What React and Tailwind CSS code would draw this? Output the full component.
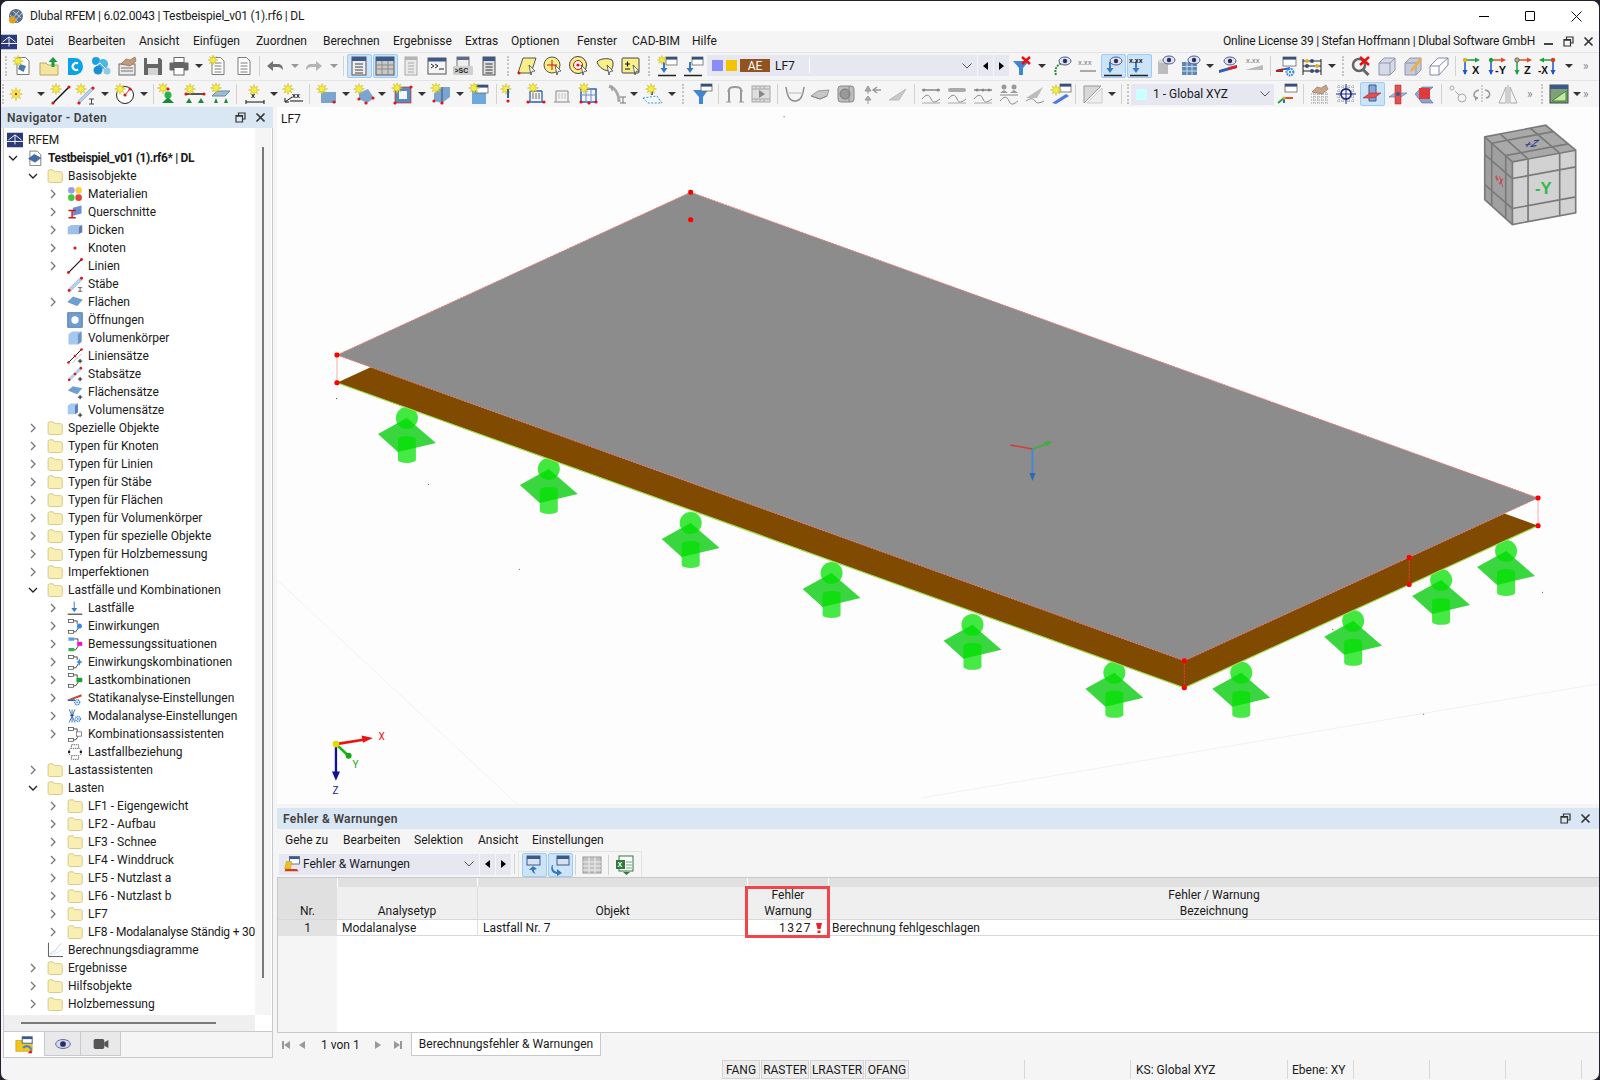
import React from 'react';

// ---------- kleine Helfer fuer die Icons ----------
const S = ({ children, s = 22 }) => (
  <svg width={s} height={s} viewBox="0 0 22 22" className="block shrink-0">
    {children}
  </svg>
);

const burst = (cx, cy, r) => {
  const pts = [];
  for (let i = 0; i < 16; i++) {
    const a = (i * Math.PI) / 8;
    const k = i % 2 ? r * 0.45 : r;
    pts.push(`${cx + k * Math.cos(a)},${cy + k * Math.sin(a)}`);
  }
  return pts.join(' ');
};
const Star = ({ x = 6, y = 6, r = 5.5 }) => <polygon points={burst(x, y, r)} fill="#f6ee3c" stroke="#c9b227" strokeWidth=".5" />;
const Dot = ({ x, y, r = 1.6, c = '#e01515' }) => <circle cx={x} cy={y} r={r} fill={c} />;
const Eye = ({ x = 15, y = 6 }) => (
  <g>
    <ellipse cx={x} cy={y} rx="6" ry="4" fill="#dfe3f2" stroke="#4b5a8c" />
    <circle cx={x} cy={y} r="2.2" fill="#27305f" />
  </g>
);
const MiniWin = ({ x = 10, y = 2, w = 11, h = 8 }) => (
  <g>
    <rect x={x} y={y} width={w} height={h} fill="#fff" stroke="#666" strokeWidth=".8" />
    <rect x={x} y={y} width={w} height="2.6" fill="#35507f" />
  </g>
);
const DocShape = ({ c = '#7a7a7a' }) => <path d="M5 2.5h8.5l3.5 3.5v13.5H5z" fill="#fff" stroke={c} />;
const DocLines = ({ c = '#7a7a7a' }) => <path d="M7.5 8h7M7.5 11h7M7.5 14h7M7.5 17h7" stroke={c} strokeWidth="1" />;
const Plus = ({ x = 18, y = 18 }) => <path d={`M${x - 3} ${y}h6M${x} ${y - 3}v6`} stroke="#111" strokeWidth="1.3" />;
const Gear = ({ x = 16, y = 17, c = '#3a8de0' }) => (
  <g>
    <circle cx={x} cy={y} r="3.4" fill="none" stroke={c} strokeWidth="2" strokeDasharray="1.6 .8" />
    <circle cx={x} cy={y} r="1.2" fill={c} />
  </g>
);
const LoadArrow = ({ x = 9, c = '#3b78c4' }) => (
  <g>
    <path d={`M${x} 7v8`} stroke={c} strokeWidth="2" />
    <path d={`M${x - 3.5} 13h7l-3.5 5z`} fill={c} />
    <path d="M2 20.5h18" stroke="#222" strokeWidth="1.4" />
  </g>
);
const SmallText = ({ x, y, c = '#222', size = 7, children }) => (
  <text x={x} y={y} fill={c} fontSize={size} fontWeight="700" fontFamily="'Liberation Sans', sans-serif">
    {children}
  </text>
);
const Cursor = () => <path d="M13 10l6 6-3 .4-1 3.6z" fill="#fff" stroke="#444" strokeWidth=".8" />;

const I = {
  neu: <S><DocShape c="#777" /><path d="M8 9l6 2-2.5 6-5.5-3z" fill="#4a78b0" /><Star x={6} y={6} /></S>,
  open: <S><path d="M2 8h6l2 2h10v10H2z" fill="#f3e4a0" stroke="#b9a863" /><path d="M15 2l4.5 5h-3v5h-3V7h-3z" fill="#1c9a3c" /></S>,
  dlubal: <S><path d="M4 3h7a8 8.5 0 0 1 0 17H4z" fill="#08a3ea" /><path d="M14 8.5a3.5 3.5 0 1 0 0 6" stroke="#fff" strokeWidth="2.2" fill="none" /></S>,
  mol: <S><circle cx="6" cy="6" r="4" fill="#18a0e2" /><circle cx="13" cy="9" r="5" fill="#4ab6ea" /><circle cx="8" cy="15" r="4.5" fill="#1c8fd0" /><circle cx="17" cy="16" r="3.5" fill="#8ccbe8" /><path d="M4 12l6-4 6 6" stroke="#fff" fill="none" /></S>,
  hand: <S><rect x="3" y="9" width="16" height="11" fill="#e8e8e8" stroke="#6a6a6a" /><path d="M5 13h12M5 16h12" stroke="#777" /><path d="M5 9l5-5 4 1 5-3 1 4-6 5z" fill="#c49a7a" stroke="#7a5a44" strokeWidth=".6" /></S>,
  save: <S><path d="M2 3h16l2 2v15H2z" fill="#666" /><rect x="5" y="3" width="11" height="6" fill="#f2f2f2" /><rect x="6" y="13" width="10" height="7" fill="#d4d4d4" /></S>,
  print: <S><rect x="6" y="2.5" width="10" height="5" fill="#fff" stroke="#666" /><rect x="1.5" y="7.5" width="19" height="8" rx="1" fill="#666" /><rect x="6" y="12.5" width="10" height="7.5" fill="#fff" stroke="#666" /></S>,
  docStar: <S><DocShape /><DocLines /><Star x={6} y={5} r={5} /></S>,
  doc: <S><DocShape /><DocLines /></S>,
  undo: <S><path d="M3 11l6-5v3h5c3 0 5 2 5 6-2-2-3-3-5-3H9v4z" fill="#737373" /></S>,
  redo: <S><path d="M19 11l-6-5v3H8c-3 0-5 2-5 6 2-2 3-3 5-3h5v4z" fill="#b5b5b5" /></S>,
  panelList: <S><rect x="4" y="2" width="14" height="18" fill="#ededed" stroke="#555" /><rect x="4" y="2" width="14" height="4" fill="#3a5a8c" /><path d="M7 9h8M7 12h8M7 15h8M7 18h8" stroke="#444" /></S>,
  panelGrid: <S><rect x="2" y="2" width="18" height="18" fill="#c9c9c9" stroke="#555" /><rect x="2" y="2" width="18" height="4" fill="#3a5a8c" /><path d="M2 10h18M2 14h18M8 6v14M14 6v14" stroke="#8a8a8a" /></S>,
  docGray: <S><rect x="5" y="2" width="12" height="18" fill="#e9e9e9" stroke="#aaa" /><rect x="5" y="2" width="12" height="3" fill="#b5b5b5" /><path d="M8 8h6M8 11h6M8 14h6M8 17h6" stroke="#aaa" /></S>,
  console: <S><rect x="2" y="3" width="18" height="16" fill="#f5f5f5" stroke="#555" /><rect x="2" y="3" width="18" height="3.5" fill="#3a5a8c" /><path d="M5 9l3 2-3 2M9 9l3 2-3 2M13 14h5" stroke="#222" fill="none" /></S>,
  sc: <S><rect x="5" y="2" width="12" height="10" fill="#eee" stroke="#777" /><rect x="5" y="2" width="12" height="3" fill="#5a6c8a" /><rect x="1" y="11" width="20" height="9" rx="1" fill="#cfcfcf" /><SmallText x={2.5} y={18.2}>{'>SC'}</SmallText></S>,
  winList: <S><rect x="5" y="2" width="12" height="18" fill="#ddd" stroke="#555" /><rect x="5" y="2" width="12" height="4" fill="#3a5a8c" /><path d="M7.5 9h7M7.5 12h7M7.5 15h7M7.5 18h7" stroke="#333" /></S>,
  para: <S><path d="M7 3h13l-5 15H2z" fill="#f8ef88" stroke="#555" /><Dot x={3} y={18} r={1.5} /><Cursor /></S>,
  circ: <S><circle cx="10" cy="10" r="8" fill="#f8ef88" stroke="#555" /><path d="M5 10h10M10 5v10" stroke="#d01010" /><Cursor /></S>,
  target: <S><circle cx="10" cy="10" r="8.5" fill="#f8ef88" stroke="#444" /><circle cx="10" cy="10" r="4.5" fill="#fff" stroke="#d01010" /><Dot x={10} y={10} /><Cursor /></S>,
  blob: <S><path d="M3 7c3-4 12-4 15-2 2 3 1 9-2 11-5 0-11-3-13-9z" fill="#f8ef88" stroke="#444" /><Cursor /></S>,
  boxPm: <S><rect x="2" y="3" width="17" height="15" rx="1" fill="#f8ef88" stroke="#444" /><path d="M5 9h5M7.5 6.5v5M5 14h5" stroke="#111" strokeWidth="1.2" /><Cursor /></S>,
  loadStar: <S><MiniWin /><LoadArrow x={8} /><Star x={6} y={5} r={4.5} /></S>,
  loadWin: <S><MiniWin /><LoadArrow x={8} /></S>,
  filterX: <S><path d="M2 6h16l-6 7v7H8v-7z" fill="#3f86d4" /><path d="M11 2l8 7M19 2l-8 7" stroke="#e81010" strokeWidth="2.5" /></S>,
  eyeBar: <S><path d="M5 20c-2-6 1-10 6-12" stroke="#2d8a3c" strokeWidth="2" fill="none" strokeDasharray="2 1" /><Eye x={14} y={6} /></S>,
  xxxGray: <S><path d="M3 16h16" stroke="#aaa" strokeWidth="2" /><SmallText x={1} y={10} c="#999">x.xx</SmallText></S>,
  loadEye: <S><LoadArrow x={8} /><Eye x={14} y={6} /></S>,
  loadXxx: <S><LoadArrow x={8} /><SmallText x={1} y={8} c="#111">x.xx</SmallText></S>,
  cylEye: <S><path d="M4 6h10v13H4z" fill="#bcbcbc" /><ellipse cx="9" cy="6" rx="5" ry="2" fill="#d9d9d9" /><Eye x={15} y={5} /></S>,
  gridEye: <S><rect x="2" y="7" width="15" height="13" fill="#5c8ab5" /><path d="M2 11.5h15M2 16h15M7 7v13M12 7v13" stroke="#c9dbe8" /><Eye x={14} y={5} /></S>,
  beamEye: <S><path d="M2 15l18-5v3L2 18z" fill="#2d5fb8" /><path d="M11 12.5l9-2.5v3l-9 2z" fill="#e02020" /><Eye x={13} y={6} /></S>,
  beamXxx: <S><path d="M2 15l18-5v5H2z" fill="#b9b9b9" /><SmallText x={3} y={8} c="#999">x.xx</SmallText></S>,
  winGear: <S><MiniWin x={8} y={2} w={13} h={9} /><path d="M1 15l14-3v3H1z" fill="#2d5fb8" /><path d="M1 15l7-1.5V17H1z" fill="#b81f1f" /><Gear x={15} y={17} /></S>,
  abacus: <S><path d="M2 4v16M20 4v16M2 6h18M2 11h18M2 16h18" stroke="#222" /><Dot x={6} y={6} c="#e0b020" r={2} /><Dot x={11} y={6} c="#35507f" r={2} /><Dot x={16} y={11} c="#e0b020" r={2} /><Dot x={6} y={11} c="#35507f" r={2} /><Dot x={11} y={16} c="#35507f" r={2} /><Dot x={16} y={16} c="#35507f" r={2} /></S>,
  searchX: <S><circle cx="9" cy="10" r="6" fill="none" stroke="#666" strokeWidth="2.5" /><path d="M13.5 15l5 5" stroke="#666" strokeWidth="3" /><path d="M10 2l9 8M19 2l-9 8" stroke="#e81010" strokeWidth="2.5" /></S>,
  cube: <S><path d="M3 8l5-5h11v12l-5 5H3z" fill="#d5d9e8" stroke="#8f95ae" /><path d="M3 8h11v12M14 8l5-5" stroke="#8f95ae" fill="none" /></S>,
  cubePen: <S><path d="M3 8l5-5h11v12l-5 5H3z" fill="#c5c9dc" stroke="#8f95ae" /><path d="M3 8h11v12M14 8l5-5" stroke="#8f95ae" fill="none" /><path d="M9 14l9-11 2 2-9 11-3 1z" fill="#f0b040" /></S>,
  cubeOpen: <S><path d="M2 11l8-8h10v7l-9 10H2z" fill="#fff" stroke="#7f8aa8" /><path d="M2 11h9v9M11 11l9-8" stroke="#7f8aa8" fill="none" /></S>,
  axisX: <S><path d="M5 5v14" stroke="#1f55c8" strokeWidth="1.5" /><path d="M2.5 15h5L5 20z" fill="#1f55c8" /><path d="M5 5h12" stroke="#1da23a" strokeWidth="1.5" /><path d="M15 2.5v5l5-2.5z" fill="#1da23a" /><Dot x={5} y={5} r={2.2} c="#e0b020" /><SmallText x={12} y={19} c="#111" size={11}>X</SmallText></S>,
  axisY: <S><path d="M5 5v14" stroke="#1f55c8" strokeWidth="1.5" /><path d="M2.5 15h5L5 20z" fill="#1f55c8" /><path d="M5 5h12" stroke="#e0501c" strokeWidth="1.5" /><path d="M15 2.5v5l5-2.5z" fill="#e0501c" /><Dot x={5} y={5} r={2.2} c="#1da23a" /><SmallText x={9} y={19} c="#111" size={11}>-Y</SmallText></S>,
  axisZ: <S><path d="M5 5v14" stroke="#1da23a" strokeWidth="1.5" /><path d="M2.5 15h5L5 20z" fill="#1da23a" /><path d="M5 5h12" stroke="#e0501c" strokeWidth="1.5" /><path d="M15 2.5v5l5-2.5z" fill="#e0501c" /><circle cx="5" cy="5" r="2.2" fill="#e0b020" stroke="#1f55c8" strokeWidth=".8" /><SmallText x={12} y={19} c="#111" size={11}>Z</SmallText></S>,
  axisMx: <S><path d="M15 5v14" stroke="#1f55c8" strokeWidth="1.5" /><path d="M12.5 15h5L15 20z" fill="#1f55c8" /><path d="M15 5H4" stroke="#1da23a" strokeWidth="1.5" /><path d="M6 2.5v5L1 5z" fill="#1da23a" /><Dot x={15} y={5} r={2.2} c="#d8401c" /><SmallText x={0} y={19} c="#111" size={10}>-X</SmallText></S>,

  // zweite Zeile
  starOnly: <S><Star x={9} y={11} r={6.5} /><Dot x={9} y={11} r={1.2} /></S>,
  lineStar: <S><path d="M3 20L19 4" stroke="#111" strokeWidth="1.4" /><Dot x={3} y={20} /><Dot x={19} y={4} /><Star x={6} y={6} /></S>,
  beamStar: <S><path d="M3 18L17 4l2 2L5 20z" fill="#b8d0ea" stroke="#7ba0cc" strokeWidth=".6" /><Dot x={4} y={20} /><Dot x={18} y={5} /><Star x={6} y={6} /><path d="M14 16h5M14 21h5M16.5 16v5" stroke="#444" /></S>,
  circStar: <S><circle cx="11" cy="12" r="8.5" fill="#fff" stroke="#222" /><path d="M11 12l5-6" stroke="#e01515" /><Dot x={16} y={6} /><Dot x={11} y={12} /><Star x={6} y={6} /></S>,
  supStar: <S><path d="M5 20l6-6 6 6z" fill="#1c8a3c" /><circle cx="11" cy="12" r="3.5" fill="#27b34a" /><Star x={6} y={5} /><Dot x={11} y={6} /></S>,
  supLine: <S><path d="M2 11h18" stroke="#222" strokeWidth="1.5" /><Dot x={2} y={11} /><Dot x={20} y={11} /><path d="M2 20l3-5 3 5zM14 20l3-5 3 5z" fill="#1c8a3c" /><Star x={6} y={6} /></S>,
  supSurf: <S><path d="M2 13l5-5h13l-5 5z" fill="#9dbdd6" stroke="#5a8bad" /><path d="M4 20l2-5 2 5zM14 20l2-5 2 5z" fill="#1c8a3c" /><Star x={6} y={5} /></S>,
  dim: <S><path d="M2 17v4M20 17v4M2 19h18" stroke="#111" /><Star x={10} y={7} /><SmallText x={7} y={15} c="#111">x</SmallText></S>,
  dimXx: <S><path d="M3 19L10 14M3 19h4M3 19v-4" stroke="#111" /><path d="M8 18h13" stroke="#111" /><Star x={6} y={6} /><SmallText x={10} y={15} c="#111">xx</SmallText></S>,
  boxStar: <S><path d="M5 9h15v11H5z" fill="#7ba5cf" /><path d="M3 7h5l-3 4z" fill="#b9d0e6" /><Dot x={18} y={19} /><Star x={6} y={6} /></S>,
  polyStar: <S><path d="M6 10l9-4 6 9-7 5-8-4z" fill="#7ba5cf" /><Dot x={6} y={16} /><Dot x={20} y={15} /><Dot x={13} y={20} /><Star x={6} y={6} /></S>,
  openStar: <S><rect x="4" y="4" width="16" height="16" fill="#5b8ab8" stroke="#d01515" strokeWidth=".6" /><rect x="8" y="8" width="8" height="8" fill="#f7f7f7" /><Star x={6} y={5} /><Dot x={20} y={4} /><Dot x={4} y={20} /></S>,
  solStar: <S><path d="M4 10l8-6h8v10l-8 6-8-2z" fill="#7ba5cf" /><path d="M12 4v16" stroke="#35507f" /><Dot x={4} y={18} /><Dot x={12} y={20} /><Star x={6} y={5} /></S>,
  winCube: <S><path d="M4 8h14v13H4z" fill="#6fa8dc" /><MiniWin x={8} y={2} w={12} h={8} /><Star x={6} y={5} /></S>,
  pinStar: <S><Star x={8} y={6} /><path d="M10 6v9" stroke="#2d5fb8" strokeWidth="2" /><Dot x={10} y={18} /></S>,
  frameStar: <S><path d="M3 19h16M5 8v11M17 8v11M5 8h12" stroke="#2d5fb8" strokeWidth="1.3" fill="none" /><path d="M8 10v6M11 10v6M14 10v6" stroke="#666" /><Star x={8} y={5} /><Dot x={3} y={19} /><Dot x={19} y={19} /></S>,
  frameGray: <S><path d="M3 19h16M5 8v11M17 8v11M5 8h12" stroke="#aaa" strokeWidth="1.5" fill="none" /><path d="M8 10v6M11 10v6M14 10v6" stroke="#bbb" /></S>,
  frameBlue: <S><rect x="4" y="6" width="15" height="13" fill="none" stroke="#2d5fb8" strokeWidth="1.5" /><path d="M4 12h15M9 6v13M14 6v13" stroke="#6a8cc8" /><Star x={7} y={5} /><Dot x={4} y={19} /><Dot x={19} y={19} /><Dot x={12} y={20} /></S>,
  beamI: <S><path d="M3 3c6 2 10 8 10 16" stroke="#aaa" strokeWidth="3" fill="none" /><path d="M14 14h6M14 20h6M17 14v6" stroke="#777" /><path d="M6 3v5" stroke="#888" /></S>,
  dashStar: <S><path d="M2 15l14-2 5 7H7z" fill="none" stroke="#2a9be0" strokeDasharray="2 1.5" /><path d="M11 6v6" stroke="#2d5fb8" strokeWidth="2" /><Star x={10} y={6} /></S>,
  filterWin: <S><path d="M2 7h15l-5 7v7H8v-7z" fill="#3f86d4" /><MiniWin x={10} y={1} w={11} h={7} /></S>,
  frameG: <S><path d="M5 19V7c0-4 12-4 12 0v12" fill="none" stroke="#999" strokeWidth="2" /><path d="M2 19h5M15 19h5M3 8h3M16 8h3" stroke="#999" /></S>,
  film: <S><rect x="2" y="3" width="18" height="16" fill="#ddd" stroke="#aaa" /><path d="M9 7v8l6-4z" fill="#888" /><path d="M2 6h18M2 16h18M6 3v3M10 3v3M14 3v3M6 16v3M10 16v3M14 16v3" stroke="#aaa" /></S>,
  wave: <S><path d="M2 4c1 6 2 14 9 14S19 10 20 4" fill="none" stroke="#888" strokeWidth="1.4" /><path d="M2 10h18" stroke="#bbb" /></S>,
  shear: <S><path d="M2 13l7-5 11-1-2 6-7 3z" fill="#c7c7c7" stroke="#999" /><path d="M2 13l9 3 7-3" fill="none" stroke="#888" /></S>,
  box3: <S><rect x="3" y="3" width="16" height="16" rx="3" fill="#bdbdbd" stroke="#888" /><circle cx="10" cy="11" r="5" fill="#999" stroke="#777" /><path d="M14 3v16" stroke="#888" /></S>,
  arrows3: <S><path d="M7 3l-3 5h6zM7 8v3M7 13l-3 4h6zM7 17v4" stroke="#999" fill="#aaa" /><path d="M20 7h-7M16 4l-4 3 4 3" stroke="#999" fill="none" strokeWidth="1.4" /></S>,
  slab: <S><path d="M2 17L19 6l-7 11z" fill="#c9c9c9" stroke="#bbb" /></S>,
  memLine: <S><path d="M2 7h18" stroke="#888" strokeWidth="1.4" /><Dot x={4} y={7} r={1.5} c="#888" /><Dot x={18} y={7} r={1.5} c="#888" /><path d="M2 16c4-5 7-5 9 0s5 3 9 0" stroke="#888" fill="none" /><path d="M2 20h18" stroke="#aaa" /></S>,
  memBar: <S><rect x="2" y="5" width="18" height="4" rx="2" fill="#aaa" /><path d="M2 16c4-5 7-5 9 0s5 3 9 0" stroke="#888" fill="none" /><path d="M2 20h18" stroke="#aaa" /></S>,
  memDots: <S><path d="M2 7h18" stroke="#888" strokeWidth="1.4" /><Dot x={5} y={7} r={1.5} c="#888" /><Dot x={11} y={7} r={1.5} c="#888" /><Dot x={17} y={7} r={1.5} c="#888" /><path d="M2 16c4-5 7-5 9 0s5 3 9 0" stroke="#888" fill="none" /><path d="M2 20h18" stroke="#aaa" /></S>,
  people: <S><circle cx="6" cy="4" r="2.5" fill="#999" /><circle cx="16" cy="4" r="2.5" fill="#999" /><path d="M2 10l4-3 4 3zM12 10l4-3 4 3z" fill="#999" /><path d="M2 12h18" stroke="#888" /><path d="M2 18c4-5 7-5 9 0s5 3 9 0" stroke="#888" fill="none" /></S>,
  wedge: <S><path d="M2 15L19 4l-6 11z" fill="#bbb" /><path d="M2 18c4-3 7-3 9 0s5 2 9 0" stroke="#888" fill="none" /></S>,
  winSlab: <S><path d="M2 20l14-9 3 2L6 21z" fill="#4a78e0" /><MiniWin x={10} y={1} w={11} h={8} /><Star x={6} y={7} /></S>,
  square: <S><path d="M2 3h17L2 20z" fill="#d8d8d8" stroke="#999" /><path d="M5 20L20 5v15z" fill="#eee" stroke="#ccc" /></S>,
  axesWin: <S><MiniWin x={9} y={1} w={12} h={8} /><path d="M8 15L2 20" stroke="#1da23a" strokeWidth="1.8" /><path d="M8 15h9" stroke="#e0501c" strokeWidth="1.8" /><path d="M8 15v5" stroke="#1f55c8" strokeWidth="1.8" /><Dot x={8} y={15} c="#e0b020" /></S>,
  gridHand: <S><path d="M2 11h18M2 14h18M2 17h18M2 20h18M5 9v12M9 9v12M13 9v12M17 9v12" stroke="#999" strokeDasharray="1 1" /><path d="M3 9l5-5 4 1 5-3 2 4-6 5z" fill="#c9a488" stroke="#8a6a50" strokeWidth=".6" /></S>,
  gridTarget: <S><path d="M2 4h18M2 8h18M2 14h18M2 18h18M4 2v18M8 2v18M14 2v18M18 2v18" stroke="#999" strokeDasharray="1 1" /><circle cx="11" cy="11" r="5" fill="#fff" stroke="#1b2a8c" strokeWidth="1.8" /><path d="M1 11h20M11 1v20" stroke="#1b2a8c" /></S>,
  planeZ: <S><path d="M8 2h7v16H8z" fill="#88a5d4" stroke="#3a5a8c" /><path d="M2 15l7-5h11l-7 5z" fill="#e25050" stroke="#a02020" strokeWidth=".5" /></S>,
  planeY: <S><path d="M2 14l6-4h12l-6 4z" fill="#a5bce0" stroke="#3a5a8c" strokeWidth=".5" /><path d="M8 2h6v19H8z" fill="#e25050" stroke="#a02020" strokeWidth=".5" /><circle cx="11" cy="11" r="2" fill="#3a5a8c" /></S>,
  planeX: <S><path d="M2 11l7-7h11l-7 7 7 9H9z" fill="#88a5d4" stroke="#3a5a8c" strokeWidth=".5" /><rect x="6" y="5" width="11" height="11" fill="#e03a3a" /></S>,
  nodeLink: <S><circle cx="5" cy="5" r="2" fill="none" stroke="#aaa" /><circle cx="15" cy="15" r="4" fill="none" stroke="#aaa" /><path d="M8 8l4 4" stroke="#aaa" /></S>,
  rotate: <S><path d="M11 2v18" stroke="#aaa" strokeDasharray="2 1" /><path d="M8 7C1 9 2 15 7 15M14 7c6 1 6 7 1 8" stroke="#999" fill="none" strokeWidth="1.5" /><path d="M4 13l3 2-3 3z" fill="#999" /></S>,
  mirror: <S><path d="M2 20L9 4v16zM20 20L13 4v16z" fill="none" stroke="#aaa" /><path d="M11 2v19" stroke="#aaa" /></S>,
  chartWin: <S><rect x="2" y="2" width="18" height="18" fill="#7fa07a" stroke="#444" /><rect x="2" y="2" width="18" height="4" fill="#3a5a8c" /><path d="M4 18L18 8v10z" fill="#c6e8a0" stroke="#3a8a3a" /></S>,

  // Tabelle
  backUp: <S><rect x="4" y="2" width="13" height="9" fill="#d7e2ee" stroke="#3a5a8c" /><rect x="4" y="2" width="13" height="3" fill="#3a5a8c" /><path d="M10 12l4 3-3 1c0 2 1 3 2 4-3-1-4-2-4-4H6z" fill="#2f78c0" /></S>,
  backDn: <S><rect x="8" y="2" width="12" height="9" fill="#d7e2ee" stroke="#3a5a8c" /><rect x="8" y="2" width="12" height="3" fill="#3a5a8c" /><path d="M4 11c-1 4 1 6 4 7v-3l5 4-5 3v-2c-5-1-7-4-5-9z" fill="#2f78c0" /></S>,
  tableGray: <S><rect x="2" y="3" width="18" height="16" fill="#c4c4c4" stroke="#999" /><path d="M2 8h18M2 12h18M2 16h18M8 3v16M14 3v16" stroke="#eee" /></S>,
  excel: <S><rect x="5" y="2" width="14" height="15" fill="#fff" stroke="#2e7a3e" /><rect x="2" y="6" width="9" height="9" fill="#2e7a3e" /><SmallText x={3.5} y={13} c="#fff">X</SmallText><path d="M12 8h6M12 11h6M12 14h6" stroke="#6aa67a" /><path d="M9 18h7l-3.5 3z" fill="#2e7a3e" /></S>,
  fwIcon: <S s={18}><rect x="8" y="2" width="12" height="9" fill="#fff" stroke="#3a5a8c" /><rect x="8" y="2" width="12" height="3" fill="#3a5a8c" /><path d="M2 17l2-9h7l-2 9z" fill="#f0c020" stroke="#b08a10" strokeWidth=".5" /><path d="M3 17h14l2 3H2z" fill="#d83a1c" /></S>,
  tabNav: <S s={20}><path d="M2 6h8l2 2h8v10H2z" fill="#f5c518" stroke="#b08a10" strokeWidth=".6" /><rect x="9" y="2" width="11" height="7" fill="#fff" stroke="#3a5a8c" /><rect x="9" y="2" width="11" height="2.5" fill="#3a5a8c" /><path d="M10 14c4-3 7-2 9 2" stroke="#3f86d4" strokeWidth="2.5" fill="none" /><path d="M15 20l4-4 1 4z" fill="#d02020" /></S>,
  tabEye: <S s={18}><ellipse cx="11" cy="11" rx="9" ry="5.5" fill="#d5d9ef" stroke="#4a558c" /><circle cx="11" cy="11" r="3.5" fill="#27305f" /></S>,
  tabCam: <S s={18}><rect x="2" y="5" width="13" height="12" rx="2" fill="#555" /><path d="M15 9l5-3v10l-5-3z" fill="#555" /></S>,
};

// ---------- Baumsymbole (16px) ----------
const T16 = ({ children }) => <S s={16}>{children}</S>;
const Combo = ({ dot, fill = '#fff' }) => (
  <T16>
    <rect x="2" y="2" width="7" height="4" fill="#fff" stroke="#444" />
    <path d="M9 4h5v4M9 19h3l4-6" stroke="#333" fill="none" strokeWidth="1.2" />
    <rect x="2" y="17" width="7" height="4" fill={fill} stroke="#444" />
    {dot}
  </T16>
);
const TI = {
  rfem: <T16><rect x="0" y="1" width="22" height="20" fill="#2b3a7a" /><path d="M0 13h22M11 4v13M2 11l9-7 9 7" stroke="#fff" fill="none" strokeWidth="1.3" /></T16>,
  model: <T16><path d="M4 1.5h10l5 5v15H4z" fill="#fff" stroke="#555" /><path d="M2 12l8-6 9 5-8 6z" fill="#3f6fa5" stroke="#27476e" strokeWidth=".6" /></T16>,
  folder: <T16><path d="M1.5 5c0-1.5 1-2.5 2-2.5h5l2 2.5h8c1.5 0 2.500 1 2.500 2.500v10c0 1.500-1 2.500-2.500 2.500h-15c-1 0-2-1-2-2.500z" fill="#f9efb3" stroke="#c9b96f" /></T16>,
  mat: <T16><circle cx="6" cy="6" r="4.5" fill="#9a9ce8" /><circle cx="16" cy="6" r="4.5" fill="#f6d23c" /><circle cx="6" cy="16" r="4.5" fill="#43c83a" /><circle cx="16" cy="16" r="4.5" fill="#e63f3f" /></T16>,
  quer: <T16><path d="M8 5l12-3v11l-12 3z" fill="#6b8fd6" /><path d="M2 9h10M2 19h10M7 9v10" stroke="#d01a1a" strokeWidth="2" /></T16>,
  dick: <T16><path d="M1 7l5-3h15l-5 3v10H1z" fill="#9dc0e8" /><path d="M16 7l5-3v10l-5 3z" fill="#5a7fb5" /></T16>,
  knoten: <T16><circle cx="11" cy="11" r="2.2" fill="#d61a1a" /></T16>,
  linie: <T16><path d="M2 20L20 2" stroke="#111" strokeWidth="1.5" /><Dot x={2} y={20} r={2} /><Dot x={20} y={2} r={2} /></T16>,
  stab: <T16><path d="M2 18L18 2l3 3L5 21z" fill="#b9cfe8" stroke="#8aa5c8" strokeWidth=".6" /><Dot x={3} y={20} r={2} /><Dot x={20} y={3} r={2} /><path d="M15 16h6M15 21h6M18 16v5" stroke="#333" /></T16>,
  flaeche: <T16><path d="M1 11l7-7 13 4-7 8z" fill="#6f9ed0" stroke="#4a78a8" strokeWidth=".6" /></T16>,
  oeffn: <T16><rect x="1" y="1" width="20" height="20" fill="#6f9ed0" stroke="#3f6a98" /><circle cx="11" cy="11" r="5" fill="#fff" /></T16>,
  vol: <T16><path d="M2 6l5-4h13v14l-5 4H2z" fill="#a7c8ee" /><path d="M15 6l5-4v14l-5 4z" fill="#6d93c6" /></T16>,
  linS: <T16><path d="M2 20L20 2" stroke="#111" strokeWidth="1.3" /><path d="M8 20L20 8" stroke="#aaa" /><Dot x={2} y={20} r={1.8} /><Dot x={11} y={11} r={1.8} /><Dot x={20} y={2} r={1.8} /><Plus /></T16>,
  stabS: <T16><path d="M2 17L17 2l3 3L5 20z" fill="#b9cfe8" /><Dot x={3} y={19} r={1.8} /><Dot x={11} y={11} r={1.8} /><Dot x={19} y={3} r={1.8} /><Plus /></T16>,
  flS: <T16><path d="M1 9l7-6 13 3-7 8z" fill="#6f9ed0" /><Plus /></T16>,
  volS: <T16><path d="M1 5l4-3h10v12l-4 3H1z" fill="#a7c8ee" /><path d="M11 5l4-3v12l-4 3z" fill="#5a7fb5" /><Plus /></T16>,
  lastf: <T16><path d="M10 2v11" stroke="#7aa6da" strokeWidth="2" /><path d="M6 11h8l-4 6z" fill="#3b78c4" /><path d="M1 19.5h20" stroke="#222" strokeWidth="1.4" /></T16>,
  einw: <Combo dot={<circle cx="17" cy="11" r="3.5" fill="#3f86e0" />} />,
  bem: <T16><rect x="2" y="2" width="8" height="4.5" fill="#5c9be8" /><path d="M10 4h5v4M9 19h3l4-6" stroke="#333" fill="none" strokeWidth="1.2" /><rect x="2" y="16.5" width="8" height="4.5" fill="#2eb84a" /><rect x="14" y="8" width="7" height="5.5" fill="#ee10d8" /></T16>,
  einwK: <Combo dot={<path d="M17 6l1.5 3.5 3 1.5-3 1.5L17 16l-1.5-3.5-3-1.5 3-1.5z" fill="#3f86e0" />} />,
  lastK: <Combo dot={<rect x="13" y="8" width="8" height="6" fill="#1da23a" />} />,
  statik: <T16><path d="M1 13l19-7v3L8 13z" fill="#c8402c" /><path d="M1 13h10v2H1z" fill="#1f4a9a" /><Gear x={14} y={17} /></T16>,
  modal: <T16><path d="M3 2l8 18M11 2L3 20M7 2v18" stroke="#2d5fb8" strokeWidth="1.2" /><path d="M4 10h6" stroke="#222" /><Gear x={15} y={15} /></T16>,
  assist: <Combo dot={<rect x="13" y="8" width="7" height="6" fill="#fff" stroke="#666" />} />,
  bez: <T16><rect x="6" y="1" width="10" height="5" fill="#fff" stroke="#333" strokeDasharray="2 1" /><rect x="6" y="16" width="10" height="5" fill="#fff" stroke="#333" strokeDasharray="2 1" /><path d="M5 6c-4 4-4 7 0 10M17 6c4 4 4 7 0 10" stroke="#333" fill="none" strokeDasharray="2 1" /><Dot x={3} y={11} r={1.6} c="#111" /><Dot x={19} y={11} r={1.6} c="#111" /></T16>,
  chart: <T16><path d="M2 1v19h20" stroke="#222" fill="none" /><path d="M4 17c3-6 5-1 8-6 2-3 4-6 8-9" stroke="#9cc4ea" fill="none" /><path d="M4 19c4-4 8-2 16-8" stroke="#c8def0" fill="none" /></T16>,
};

const TREE = [
  { l: 0, t: 'RFEM', i: 'rfem' },
  { l: 1, t: 'Testbeispiel_v01 (1).rf6* | DL', i: 'model', s: 'o', b: 1 },
  { l: 2, t: 'Basisobjekte', i: 'folder', s: 'o' },
  { l: 3, t: 'Materialien', i: 'mat', s: 'c' },
  { l: 3, t: 'Querschnitte', i: 'quer', s: 'c' },
  { l: 3, t: 'Dicken', i: 'dick', s: 'c' },
  { l: 3, t: 'Knoten', i: 'knoten', s: 'c' },
  { l: 3, t: 'Linien', i: 'linie', s: 'c' },
  { l: 3, t: 'Stäbe', i: 'stab' },
  { l: 3, t: 'Flächen', i: 'flaeche', s: 'c' },
  { l: 3, t: 'Öffnungen', i: 'oeffn' },
  { l: 3, t: 'Volumenkörper', i: 'vol' },
  { l: 3, t: 'Liniensätze', i: 'linS' },
  { l: 3, t: 'Stabsätze', i: 'stabS' },
  { l: 3, t: 'Flächensätze', i: 'flS' },
  { l: 3, t: 'Volumensätze', i: 'volS' },
  { l: 2, t: 'Spezielle Objekte', i: 'folder', s: 'c' },
  { l: 2, t: 'Typen für Knoten', i: 'folder', s: 'c' },
  { l: 2, t: 'Typen für Linien', i: 'folder', s: 'c' },
  { l: 2, t: 'Typen für Stäbe', i: 'folder', s: 'c' },
  { l: 2, t: 'Typen für Flächen', i: 'folder', s: 'c' },
  { l: 2, t: 'Typen für Volumenkörper', i: 'folder', s: 'c' },
  { l: 2, t: 'Typen für spezielle Objekte', i: 'folder', s: 'c' },
  { l: 2, t: 'Typen für Holzbemessung', i: 'folder', s: 'c' },
  { l: 2, t: 'Imperfektionen', i: 'folder', s: 'c' },
  { l: 2, t: 'Lastfälle und Kombinationen', i: 'folder', s: 'o' },
  { l: 3, t: 'Lastfälle', i: 'lastf', s: 'c' },
  { l: 3, t: 'Einwirkungen', i: 'einw', s: 'c' },
  { l: 3, t: 'Bemessungssituationen', i: 'bem', s: 'c' },
  { l: 3, t: 'Einwirkungskombinationen', i: 'einwK', s: 'c' },
  { l: 3, t: 'Lastkombinationen', i: 'lastK', s: 'c' },
  { l: 3, t: 'Statikanalyse-Einstellungen', i: 'statik', s: 'c' },
  { l: 3, t: 'Modalanalyse-Einstellungen', i: 'modal', s: 'c' },
  { l: 3, t: 'Kombinationsassistenten', i: 'assist', s: 'c' },
  { l: 3, t: 'Lastfallbeziehung', i: 'bez' },
  { l: 2, t: 'Lastassistenten', i: 'folder', s: 'c' },
  { l: 2, t: 'Lasten', i: 'folder', s: 'o' },
  { l: 3, t: 'LF1 - Eigengewicht', i: 'folder', s: 'c' },
  { l: 3, t: 'LF2 - Aufbau', i: 'folder', s: 'c' },
  { l: 3, t: 'LF3 - Schnee', i: 'folder', s: 'c' },
  { l: 3, t: 'LF4 - Winddruck', i: 'folder', s: 'c' },
  { l: 3, t: 'LF5 - Nutzlast a', i: 'folder', s: 'c' },
  { l: 3, t: 'LF6 - Nutzlast b', i: 'folder', s: 'c' },
  { l: 3, t: 'LF7', i: 'folder', s: 'c' },
  { l: 3, t: 'LF8 - Modalanalyse Ständig + 30', i: 'folder', s: 'c', n: 1 },
  { l: 2, t: 'Berechnungsdiagramme', i: 'chart' },
  { l: 2, t: 'Ergebnisse', i: 'folder', s: 'c' },
  { l: 2, t: 'Hilfsobjekte', i: 'folder', s: 'c' },
  { l: 2, t: 'Holzbemessung', i: 'folder', s: 'c' },
];
const PAD = { 0: 'pl-[3px]', 1: 'pl-[1px]', 2: 'pl-[21px]', 3: 'pl-[41px]' };

const MENU = [
  ['Datei', 'w-[42px]'], ['Bearbeiten', 'w-[71px]'], ['Ansicht', 'w-[54px]'], ['Einfügen', 'w-[63px]'], ['Zuordnen', 'w-[67px]'], ['Berechnen', 'w-[70px]'],
  ['Ergebnisse', 'w-[72px]'], ['Extras', 'w-[46px]'], ['Optionen', 'w-[66px]'], ['Fenster', 'w-[55px]'], ['CAD-BIM', 'w-[60px]'], ['Hilfe', 'w-[40px]'],
];
const PANEL_MENU = [['Gehe zu', 'w-[58px]'], ['Bearbeiten', 'w-[71px]'], ['Selektion', 'w-[64px]'], ['Ansicht', 'w-[54px]'], ['Einstellungen', 'w-[90px]']];

// ---------- Toolbar-Bausteine ----------
function B({ i, on, w = 'w-[26px]' }) {
  return (
    <div className={`flex h-[24px] shrink-0 items-center justify-center ${w}`}>
      <div className={on ? 'flex h-[24px] w-[25px] shrink-0 items-center justify-center rounded-[2px] border border-[#9ccbf3] bg-[#cde4f8]' : 'flex shrink-0 items-center justify-center'}>{I[i]}</div>
    </div>
  );
}
function A({ w = 'w-[13px]' }) {
  return (
    <div className={`flex h-[24px] shrink-0 items-center justify-center ${w}`}>
      <div className="h-0 w-0 shrink-0 border-x-[4px] border-t-[4px] border-x-transparent border-t-[#333]" />
    </div>
  );
}
function AG() {
  return (
    <div className="flex h-[24px] w-[13px] shrink-0 items-center justify-center">
      <div className="h-0 w-0 border-x-[4px] border-t-[4px] border-x-transparent border-t-[#999]" />
    </div>
  );
}
function Sep({ w = 'w-[6px]' }) {
  return (
    <div className={`flex h-[24px] shrink-0 items-center justify-center ${w}`}>
      <div className="h-[20px] w-px bg-[#d2d2d2]" />
    </div>
  );
}
function Grip({ w = 'w-[12px]' }) {
  return (
    <div className={`flex h-[26px] shrink-0 items-center justify-center ${w}`}>
      <div className="h-[20px] w-0 border-l-2 border-dotted border-[#c4c4c4]" />
    </div>
  );
}
const More = () => <div className="ml-auto w-[16px] text-[12px] leading-none text-[#888]">»</div>;
const Chev = () => (
  <svg width="10" height="6" viewBox="0 0 10 6" className="shrink-0">
    <path d="M.5.5L5 5 9.5.5" fill="none" stroke="#555" />
  </svg>
);
const NavBtn = ({ dir, w = 'w-[15px]' }) => (
  <div className={`flex h-[21px] items-center justify-center bg-[#e6e7f1] ${w}`}>
    <div className={dir === 'l' ? 'h-0 w-0 border-y-[4px] border-r-[5px] border-y-transparent border-r-black' : 'h-0 w-0 border-y-[4px] border-l-[5px] border-y-transparent border-l-black'} />
  </div>
);
const PinX = () => (
  <div className="flex items-center gap-[9px]">
    <svg width="11" height="11" viewBox="0 0 11 11"><path d="M3.5 3V1H10v6H7.5M1 3.5h6.5V10H1z" fill="none" stroke="#333" strokeWidth="1.2" /><path d="M1 4h6" stroke="#333" strokeWidth="1.5" /></svg>
    <svg width="11" height="11" viewBox="0 0 11 11"><path d="M1.5 1.5l8 8M9.5 1.5l-8 8" stroke="#333" strokeWidth="1.7" /></svg>
  </div>
);

// ---------- Modellansicht ----------
const SUPPORTS = [
  [407, 418], [549, 469], [691, 523], [832, 573], [973, 625], [1115, 673], [1242, 673], [1354, 621], [1442, 580], [1507, 551],
];
const DOTS = [[784, 116], [548, 361], [336, 398], [428, 484], [519, 569], [1543, 592], [1424, 714], [1333, 629], [1258, 508]];

function Support({ x, y }) {
  return (
    <g>
      <polygon points={`${x - 29},${y + 16} ${x},${y} ${x + 29},${y + 25} ${x - 9},${y + 34}`} fill="#3ad63f" />
      <circle cx={x} cy={y} r="11" fill="#00e000" fillOpacity=".75" />
      <path d={`M${x - 9} ${y + 21}a9 3 0 0 1 18 0v21a9 3 0 0 1-18 0z`} fill="#00e000" fillOpacity=".72" />
    </g>
  );
}
function Node({ x, y }) {
  return <rect x={x - 2.5} y={y - 2.5} width="5" height="5" rx="2" fill="#ff0000" />;
}
function Model() {
  return (
    <svg viewBox="277 107 1323 697" className="block h-full w-full">
      <path d="M277 580L517 804M923 798L1600 684" stroke="#f1f1f1" fill="none" />
      {DOTS.map(([x, y]) => (
        <rect key={`${x}-${y}`} x={x} y={y} width="1" height="1" fill="#555" />
      ))}
      {SUPPORTS.map(([x, y]) => (
        <Support key={x} x={x} y={y} />
      ))}
      <polygon points="337,382.7 691,219.5 1539,525.7 1185,688" fill="#804a00" />
      <path d="M337 382.7L1185 688L1539 525.7" fill="none" stroke="#9ae04a" strokeWidth="1.2" />
      <polygon points="691,192 337,355 1185,661 1539,498" fill="#8c8c8c" />
      <path d="M691 192L337 355L1185 661L1539 498Z" fill="none" stroke="#f08080" strokeWidth="1" strokeDasharray="2 1" />
      <path d="M337 355v27.7M1539 498v27.7" stroke="#f9c8c8" strokeWidth="1.5" />
      <path d="M1185 661v27M1410 557.7v27" stroke="#ef3a3a" strokeDasharray="2 1" />
      <Node x={691} y={192} /><Node x={691} y={219.5} /><Node x={337} y={355} /><Node x={337} y={382.7} />
      <Node x={1185} y={661} /><Node x={1185} y={688} /><Node x={1539} y={498} /><Node x={1539} y={525.7} />
      <Node x={1410} y={557.7} /><Node x={1410} y={584.7} />

      {/* lokale Achsen auf der Platte */}
      <path d="M1033 449L1011 445" stroke="#d83a3a" strokeWidth="1.5" />
      <path d="M1033 449L1050 443" stroke="#3cae3c" strokeWidth="1.5" />
      <path d="M1044 442l9-1-5 5z" fill="#3cae3c" />
      <path d="M1033 449v27" stroke="#3a8adc" strokeWidth="1.8" />
      <path d="M1030 473h6l-3 8z" fill="#2a6ab0" />

      {/* Ansichtswuerfel */}
      <g transform="translate(1440 115) scale(.33333)">
        <polygon points="137,65 320,30 410,105 220,140" fill="#a9a9a9" />
        <polygon points="137,65 220,140 220,328 137,253" fill="#a0a0a0" />
        <polygon points="220,140 410,105 410,293 220,328" fill="#d2d2d2" />
        <path d="M137 65L320 30L410 105V293L220 328L137 253ZM220 140L410 105M220 140V328M137 65L220 140" fill="none" stroke="#7a7a7a" strokeWidth="5" />
        <path d="M267 131V319M362 114V302M220 190L410 155M220 280L410 245M158 84V272M200 122V310M137 118L220 190M137 208L220 280M183 56L267 131M274 39L362 114M158 84L342 49M199 121L387 86" fill="none" stroke="#7a7a7a" strokeWidth="5" />
        <text x="288" y="235" fill="#33b84a" fontSize="50" fontWeight="700" fontFamily="'Liberation Sans', sans-serif">-Y</text>
        <text x="0" y="0" transform="translate(252 99) skewX(-30) skewY(-10)" fill="#30408f" fontSize="30" fontWeight="700" fontFamily="'Liberation Sans', sans-serif">+Z</text>
        <text x="0" y="0" transform="translate(168 196) skewY(40) scale(.55 1)" fill="#c8404a" fontSize="36" fontWeight="700" fontFamily="'Liberation Sans', sans-serif">+X</text>
      </g>

      {/* Koordinatenkreuz */}
      <g transform="translate(310 720) scale(.33333)">
        <path d="M78 73L160 60" stroke="#ee1111" strokeWidth="8" />
        <path d="M155 47l34 8-30 14z" fill="#ee1111" />
        <path d="M78 73L118 110" stroke="#11bb11" strokeWidth="8" />
        <circle cx="116" cy="108" r="9" fill="#11aa11" />
        <path d="M78 73V160" stroke="#11119a" strokeWidth="7" />
        <path d="M66 155h24l-12 28z" fill="#11119a" />
        <circle cx="78" cy="73" r="10" fill="#e8d800" />
        <text x="206" y="62" fill="#ee1111" fontSize="30" fontFamily="'Roboto', sans-serif">X</text>
        <text x="128" y="144" fill="#11aa11" fontSize="30" fontFamily="'Roboto', sans-serif">Y</text>
        <text x="68" y="224" fill="#20208a" fontSize="30" fontFamily="'Roboto', sans-serif">Z</text>
      </g>
    </svg>
  );
}

export default function App() {
  return (
    <div className="h-[1080px] w-[1600px] overflow-hidden bg-[#20202e] font-['Roboto',sans-serif] text-[12px] leading-none text-[#1a1a1a]">
      <div className="ml-px mt-px flex h-[1079px] w-[1598px] flex-col overflow-hidden rounded-[7px] bg-[#f5f5f5]">
        {/* ===== Titelleiste ===== */}
        <div className="flex h-[30px] shrink-0 items-center bg-white">
          <div className="ml-[6px] mr-[6px]">
            <svg width="17" height="17" viewBox="0 0 17 17">
              <circle cx="9" cy="8" r="7" fill="#5a6f8c" />
              <path d="M4 12l8-9M7 14l8-9M3 7l8 7M6 3l8 7" stroke="#c9d4de" />
              <circle cx="5.5" cy="12" r="3.5" fill="#e0a020" />
            </svg>
          </div>
          <span className="tracking-[-0.24px]">Dlubal RFEM | 6.02.0043 | Testbeispiel_v01 (1).rf6 | DL</span>
          <div className="ml-auto flex items-center">
            <div className="flex h-[30px] w-[46px] items-center justify-center"><div className="h-px w-[10px] bg-black" /></div>
            <div className="flex h-[30px] w-[46px] items-center justify-center"><div className="h-[10px] w-[10px] rounded-[1px] border border-black" /></div>
            <div className="flex h-[30px] w-[46px] items-center justify-center">
              <svg width="11" height="11" viewBox="0 0 11 11"><path d="M.5.5l10 10M10.5.5l-10 10" stroke="#111" /></svg>
            </div>
          </div>
        </div>

        {/* ===== Menueleiste ===== */}
        <div className="flex h-[20px] shrink-0 items-center bg-[#f5f5f5]">
          <div className="mr-[9px] h-[14px] w-[16px] shrink-0">{TI.rfem}</div>
          <div className="flex items-center">
            {MENU.map(([m, w]) => (
              <span key={m} className={w}>{m}</span>
            ))}
          </div>
          <span className="ml-auto mr-[9px] tracking-[-0.23px]">Online License 39 | Stefan Hoffmann | Dlubal Software GmbH</span>
          <div className="flex items-center gap-[10px] pr-[5px]">
            <div className="mt-[6px] h-[2px] w-[9px] bg-[#444]" />
            <PinX />
          </div>
        </div>

        {/* ===== Toolbar 1 ===== */}
        <div className="mt-px flex h-[26px] shrink-0 items-center border-t border-[#e4e4e4]">
          <Grip w="w-[9px]" />
          <B i="neu" /><B i="open" /><B i="dlubal" /><B i="mol" /><B i="hand" /><B i="save" /><B i="print" /><A />
          <B i="docStar" /><B i="doc" /><Sep w="w-[5px]" />
          <B i="undo" /><AG /><B i="redo" /><AG /><Sep />
          <B i="panelList" on /><B i="panelGrid" on /><B i="docGray" /><B i="console" /><B i="sc" /><B i="winList" />
          <Grip />
          <B i="para" /><B i="circ" /><B i="target" /><B i="blob" /><B i="boxPm" />
          <Grip w="w-[10px]" />
          <B i="loadStar" /><B i="loadWin" />
          <div className="ml-px flex h-[21px] w-[270px] shrink-0 items-center bg-[#e6e7f1] pl-[5px] pr-[5px]">
            <div className="h-[11px] w-[11px] bg-[#8c8cf8]" />
            <div className="ml-[3px] h-[11px] w-[11px] bg-[#f5c400]" />
            <div className="ml-[3px] flex h-[13px] w-[30px] items-center justify-center bg-[#91531f] text-white">AE</div>
            <span className="ml-[5px]">LF7</span>
            <div className="ml-[14px] h-[15px] w-px bg-white" />
            <div className="ml-auto"><Chev /></div>
          </div>
          <div className="ml-px flex gap-px"><NavBtn dir="l" /><NavBtn dir="r" /></div>
          <B i="filterX" /><A w="w-[14px]" /><B i="eyeBar" /><B i="xxxGray" w="w-[25px]" />
          <B i="loadEye" on /><B i="loadXxx" on /><B i="cylEye" /><B i="gridEye" /><A w="w-[11px]" />
          <B i="beamEye" /><B i="beamXxx" /><Sep />
          <B i="winGear" /><B i="abacus" /><A />
          <Grip w="w-[10px]" />
          <B i="searchX" /><B i="cube" /><B i="cubePen" /><B i="cubeOpen" /><Sep />
          <B i="axisX" /><B i="axisY" /><B i="axisZ" /><B i="axisMx" /><A />
          <More />
        </div>

        {/* ===== Toolbar 2 ===== */}
        <div className="mt-[2px] flex h-[27px] shrink-0 items-center border-t border-[#e4e4e4]">
          <Grip w="w-[4px]" />
          <B i="starOnly" /><A w="w-[19px]" /><B i="lineStar" w="w-[22px]" /><B i="beamStar" w="w-[28px]" /><A w="w-[10px]" /><B i="circStar" w="w-[30px]" /><A w="w-[8px]" /><Sep w="w-[10px]" />
          <B i="supStar" w="w-[20px]" /><B i="supLine" w="w-[34px]" /><B i="supSurf" w="w-[18px]" /><Sep w="w-[12px]" />
          <B i="dim" /><A w="w-[11px]" /><B i="dimXx" w="w-[28px]" /><Sep w="w-[5px]" />
          <B i="boxStar" w="w-[30px]" /><A w="w-[8px]" /><B i="polyStar" w="w-[28px]" /><A w="w-[8px]" /><B i="openStar" w="w-[32px]" /><A w="w-[8px]" /><B i="solStar" w="w-[30px]" /><A w="w-[8px]" /><B i="winCube" w="w-[30px]" /><Sep w="w-[4px]" />
          <B i="pinStar" w="w-[22px]" /><B i="frameStar" w="w-[32px]" /><B i="frameGray" w="w-[20px]" /><B i="frameBlue" w="w-[32px]" /><B i="beamI" /><A w="w-[7px]" /><B i="dashStar" w="w-[30px]" /><A w="w-[10px]" /><Grip />
          <B i="filterWin" /><Sep />
          <B i="frameG" w="w-[28px]" /><B i="film" w="w-[24px]" /><Sep w="w-[8px]" />
          <B i="wave" w="w-[28px]" /><B i="shear" w="w-[22px]" /><B i="box3" w="w-[30px]" /><B i="arrows3" w="w-[22px]" /><B i="slab" w="w-[30px]" /><Sep w="w-[2px]" />
          <B i="memLine" w="w-[32px]" /><B i="memBar" w="w-[20px]" /><B i="memDots" w="w-[32px]" /><B i="people" w="w-[20px]" /><B i="wedge" w="w-[32px]" /><B i="winSlab" w="w-[20px]" />
          <Sep w="w-[9px]" /><B i="square" /><A w="w-[12px]" /><Sep /><Grip w="w-[7px]" />
          <div className="flex h-[21px] w-[143px] shrink-0 items-center bg-[#e6e7f1] pl-[5px] pr-[4px]">
            <div className="h-[11px] w-[11px] bg-[#ccffff]" />
            <span className="ml-[6px]">1 - Global XYZ</span>
            <div className="ml-auto"><Chev /></div>
          </div>
          <B i="axesWin" /><Sep />
          <B i="gridHand" w="w-[28px]" /><B i="gridTarget" w="w-[24px]" /><B i="planeZ" on w="w-[28px]" /><B i="planeY" w="w-[24px]" /><B i="planeX" w="w-[28px]" /><Sep />
          <B i="nodeLink" w="w-[28px]" /><B i="rotate" w="w-[20px]" /><B i="mirror" w="w-[32px]" />
          <div className="w-[14px] pl-[3px] text-[12px] text-[#888]">»</div>
          <Grip w="w-[7px]" />
          <B i="chartWin" w="w-[28px]" /><A w="w-[8px]" />
          <More />
        </div>

        {/* ===== Hauptbereich ===== */}
        <div className="flex min-h-0 flex-1">
          {/* ----- Navigator ----- */}
          <div className="mr-[4px] flex w-[272px] shrink-0 flex-col">
            <div className="flex h-[21px] shrink-0 items-center justify-between bg-[#d9e6f3] pl-[6px] pr-[7px] font-semibold tracking-[0.35px] text-[#3f3f3f]">
              <span>Navigator - Daten</span>
              <PinX />
            </div>
            <div className="mb-[2px] ml-[2px] flex min-h-0 flex-1 flex-col border-x border-b border-[#c8c8d0] bg-white">
              <div className="flex min-h-0 flex-1">
                <div className="w-[251px] overflow-hidden pt-[3px]">
                  {TREE.map((r) => (
                    <div key={r.t} className={`flex h-[18px] items-center whitespace-nowrap ${PAD[r.l]}`}>
                      {r.l > 0 && (
                        <div className="w-[22px] shrink-0 pl-[3px]">
                          {r.s === 'o' && (
                            <svg width="10" height="10" viewBox="0 0 10 10"><path d="M1 3l4 4 4-4" fill="none" stroke="#222" strokeWidth="1.3" /></svg>
                          )}
                          {r.s === 'c' && (
                            <svg width="10" height="10" viewBox="0 0 10 10"><path d="M3 1l4 4-4 4" fill="none" stroke="#777" strokeWidth="1.3" /></svg>
                          )}
                        </div>
                      )}
                      <div className="mr-[5px] h-[16px] w-[16px] shrink-0">{TI[r.i]}</div>
                      <span className={r.b ? 'font-bold tracking-[-0.37px]' : r.n ? 'tracking-[-0.2px]' : ''}>{r.t}</span>
                    </div>
                  ))}
                </div>
                <div className="flex w-[16px] flex-col items-center bg-[#f5f5f5] pt-[19px]">
                  <div className="h-[831px] w-[2px] bg-[#7a7a7a]" />
                </div>
              </div>
              <div className="flex h-[16px] shrink-0">
                <div className="flex w-[251px] items-center bg-[#efefef] pl-[17px]">
                  <div className="h-[2px] w-[195px] bg-[#7a7a7a]" />
                </div>
              </div>
              <div className="flex h-[26px] shrink-0 border-t border-[#c8c8d0]">
                <div className="flex w-[40px] items-center justify-center bg-white">{I.tabNav}</div>
                <div className="flex h-[24px] w-[37px] items-center justify-center border-x border-b border-[#c8c8d0] bg-[#e9e9e9]">{I.tabEye}</div>
                <div className="flex h-[24px] w-[40px] items-center justify-center border-b border-r border-[#c8c8d0] bg-[#e9e9e9]">{I.tabCam}</div>
                <div className="flex-1 bg-[#f5f5f5]" />
              </div>
            </div>
          </div>

          {/* ----- rechte Spalte ----- */}
          <div className="flex min-w-0 flex-1 flex-col">
            <div className="relative mb-[4px] h-[697px] shrink-0 bg-[#fdfdfd]">
              <Model />
              <span className="absolute left-[4px] top-[6px]">LF7</span>
            </div>

            {/* ----- Fehler & Warnungen ----- */}
            <div className="flex h-[21px] shrink-0 items-center justify-between bg-[#d9e6f3] pl-[6px] pr-[8px] font-semibold tracking-[0.35px] text-[#3f3f3f]">
              <span>Fehler &amp; Warnungen</span>
              <PinX />
            </div>
            <div className="flex h-[22px] shrink-0 items-center pl-[8px]">
              {PANEL_MENU.map(([m, w]) => (
                <span key={m} className={w}>{m}</span>
              ))}
            </div>
            <div className="flex h-[26px] shrink-0 items-center">
              <div className="ml-[2px] flex h-[21px] w-[200px] shrink-0 items-center bg-[#e6e7f1] pl-[4px] pr-[5px]">
                <div className="h-[18px] w-[18px]">{I.fwIcon}</div>
                <span className="ml-[2px]">Fehler &amp; Warnungen</span>
                <div className="ml-auto"><Chev /></div>
              </div>
              <div className="ml-px flex gap-px"><NavBtn dir="l" /><NavBtn dir="r" /></div>
              <div className="mx-[3px] h-[20px] w-px bg-[#d2d2d2]" />
              <div className="flex h-[26px] items-center border-x border-t border-[#e4e4e4] px-[2px]">
                <B i="backUp" on /><B i="backDn" on />
                <Sep w="w-[5px]" />
                <B i="tableGray" w="w-[28px]" />
                <Sep w="w-[5px]" />
                <B i="excel" w="w-[28px]" />
              </div>
            </div>

            {/* ----- Tabelle ----- */}
            <div className="relative flex h-[156px] shrink-0 flex-col border-y border-l border-[#c8c8c8] bg-white">
              <div className="grid h-[9px] shrink-0 grid-cols-[59px_140px_270px_81px_1fr] bg-[#e0e0e0]">
                <div />
                <div className="border-l border-white" />
                <div className="border-l border-white" />
                <div className="border-l border-white" />
                <div className="border-l border-white" />
              </div>
              <div className="grid h-[33px] shrink-0 grid-cols-[59px_140px_270px_81px_1fr] border-b border-[#d8d8d8] bg-[#efefef] leading-[16px]">
                <div className="flex items-end justify-center bg-[#e0e0e0]">Nr.</div>
                <div className="flex items-end justify-center">Analysetyp</div>
                <div className="flex items-end justify-center border-l border-[#dcdcdc]">Objekt</div>
                <div className="flex flex-col items-center justify-end border-l border-[#dcdcdc]"><span>Fehler</span><span>Warnung</span></div>
                <div className="flex flex-col items-center justify-end border-l border-[#dcdcdc]"><span>Fehler / Warnung</span><span>Bezeichnung</span></div>
              </div>
              <div className="flex min-h-0 flex-1">
                <div className="w-[59px] shrink-0 bg-[#f5f5f5]">
                  <div className="flex h-[16px] items-center justify-center bg-[#e2e2e2]">1</div>
                </div>
                <div className="grid h-[16px] flex-1 grid-cols-[140px_270px_81px_1fr] items-stretch border-b border-[#d8d8d8]">
                  <div className="flex items-center pl-[5px]">Modalanalyse</div>
                  <div className="flex items-center border-l border-[#e0e0e0] pl-[5px]">Lastfall Nr. 7</div>
                  <div className="flex items-center justify-end border-l border-[#e0e0e0] pr-[5px]">
                    <span className="tracking-[1.5px]">1327</span>
                    <svg width="8" height="12" viewBox="0 0 8 12" className="ml-[3px]"><path d="M1 1h6L5.5 7h-3z" fill="#ee2020" /><rect x="2.5" y="8.5" width="3" height="2.5" fill="#ee2020" /></svg>
                  </div>
                  <div className="flex items-center pl-[4px]">Berechnung fehlgeschlagen</div>
                </div>
              </div>
              {/* rote Markierung */}
              <div className="absolute left-[467px] top-[8px] h-[52px] w-[85px] border-[3px] border-[#f3444a]" />
            </div>

            {/* ----- Blattregister ----- */}
            <div className="flex h-[23px] shrink-0 items-stretch">
              <div className="flex w-[134px] items-center">
                <div className="ml-[5px] flex items-center"><div className="h-[8px] w-[2px] bg-[#999]" /><div className="h-0 w-0 border-y-[4px] border-r-[6px] border-y-transparent border-r-[#999]" /></div>
                <div className="ml-[9px] h-0 w-0 border-y-[4px] border-r-[6px] border-y-transparent border-r-[#999]" />
                <span className="ml-[16px]">1 von 1</span>
                <div className="ml-auto mr-[13px] h-0 w-0 border-y-[4px] border-l-[6px] border-y-transparent border-l-[#999]" />
                <div className="mr-[9px] flex items-center"><div className="h-0 w-0 border-y-[4px] border-l-[6px] border-y-transparent border-l-[#999]" /><div className="h-[8px] w-[2px] bg-[#999]" /></div>
              </div>
              <div className="flex w-[190px] items-center justify-center whitespace-nowrap border-x border-b border-[#c8c8d0] bg-white">Berechnungsfehler &amp; Warnungen</div>
            </div>
          </div>
        </div>

        {/* ===== Statusleiste ===== */}
        <div className="flex h-[20px] shrink-0 items-stretch pb-px pl-[721px]">
          <div className="flex w-[38px] items-center justify-center border border-[#d4d4d4] bg-[#ededed]">FANG</div>
          <div className="ml-px flex w-[48px] items-center justify-center border border-[#d4d4d4] bg-[#ededed]">RASTER</div>
          <div className="ml-px flex w-[54px] items-center justify-center border border-[#d4d4d4] bg-[#ededed]">LRASTER</div>
          <div className="ml-px flex w-[44px] items-center justify-center border border-[#d4d4d4] bg-[#ededed]">OFANG</div>
          <div className="w-[116px] border-r border-[#d8d8d8]" />
          <div className="w-[106px] border-r border-[#d8d8d8]" />
          <div className="flex w-[157px] items-center border-r border-[#d8d8d8] pl-[5px]">KS: Global XYZ</div>
          <div className="flex w-[66px] items-center border-r border-[#d8d8d8] pl-[4px]">Ebene: XY</div>
          <div className="w-[76px] border-r border-[#d8d8d8]" />
          <div className="w-[76px] border-r border-[#d8d8d8]" />
          <div className="w-[76px] border-r border-[#d8d8d8]" />
        </div>
      </div>
    </div>
  );
}
